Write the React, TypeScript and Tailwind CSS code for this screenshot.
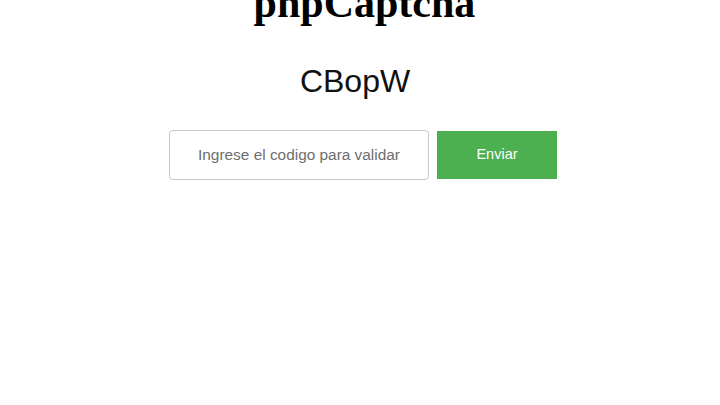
import { useState } from "react";

const CAPTCHA = "CBopW";

export default function App() {
  const [code, setCode] = useState("");

  return (
    <div className="w-[720px] h-[405px] overflow-hidden bg-white">
      <h1 className="mt-[-18px] text-center text-[42px] leading-[42px] font-bold font-['Liberation_Serif',serif] text-black pl-[9px]">
        phpCaptcha
      </h1>

      <div className="mt-[41px] text-center text-[32px] leading-[32px] font-['Liberation_Sans',Arial,sans-serif] text-[#111] pr-[10px]">
        {CAPTCHA}
      </div>

      <form
        className="mt-[33px] flex items-center justify-center gap-2 pl-[6px] font-['Liberation_Sans',Arial,sans-serif]"
        onSubmit={(e) => e.preventDefault()}
      >
        <input
          type="text"
          value={code}
          onChange={(e) => setCode(e.target.value)}
          placeholder="Ingrese el codigo para validar"
          className="w-[260px] h-[50px] rounded-[4px] border border-[#c8c8c8] px-3 text-center text-[15.4px] text-[#333] placeholder:text-[#6e6e6e] outline-none"
        />
        <button
          type="submit"
          className="w-[120px] h-[48px] bg-[#4caf50] text-white text-[14.5px]"
        >
          Enviar
        </button>
      </form>
    </div>
  );
}
